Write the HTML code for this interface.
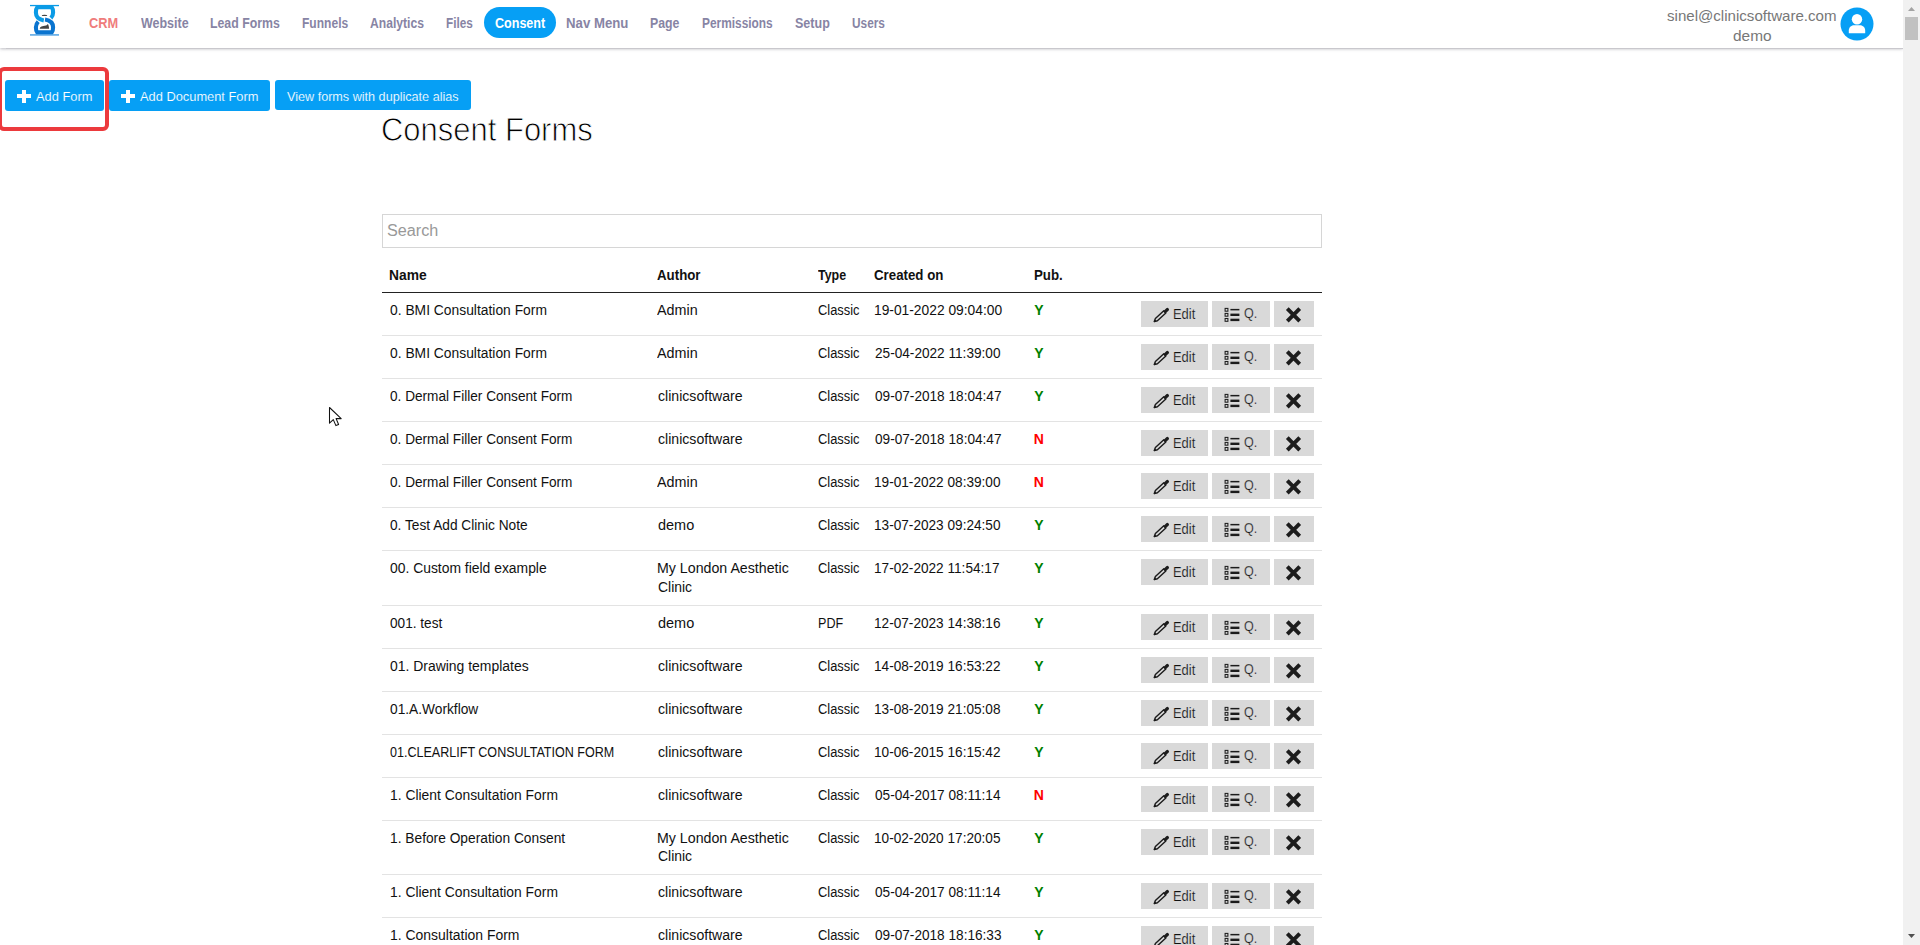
<!DOCTYPE html><html><head><meta charset="utf-8"><style>
html,body{margin:0;padding:0;background:#fff;width:1920px;height:945px;overflow:hidden;position:relative}
body{font-family:"Liberation Sans",sans-serif}
.t{position:absolute;white-space:nowrap;transform-origin:0 0;display:block}
.abs{position:absolute}
</style></head><body>

<div class="abs" style="left:0;top:0;width:1903px;height:48px;background:#fff;box-shadow:0 1px 3px rgba(60,60,80,0.35)"></div>
<div class="abs" style="left:6px;top:48px;width:1897px;height:1px;background:#c9c8cd"></div>
<svg class="abs" style="left:26px;top:2px" width="38" height="38" viewBox="0 0 38 38">
<rect x="4" y="2.9" width="29" height="1.3" fill="#0a9be6"/>
<rect x="4" y="32" width="29" height="1.8" fill="#6fb2e8"/>
<path d="M17.8,18.4 C12.5,17.5 9.9,14.5 9.9,10.5 C9.9,8.2 10.3,6.4 11.2,5.3 L25.8,5.3 C26.7,6.4 27.1,8.2 27.1,10.5 C27.1,12.8 26.3,14.6 24.9,16" fill="none" stroke="#0a9be6" stroke-width="4.1"/>
<path d="M19,17.4 C24.5,18.3 27.1,21.2 27.1,25.2 C27.1,27.5 26.7,29.3 25.8,30.3 L11.2,30.3 C10.3,29.3 9.9,27.5 9.9,25.2 C9.9,22.8 10.8,21 12.2,19.6" fill="none" stroke="#0a74cf" stroke-width="4.1"/>
<ellipse cx="18.5" cy="13.4" rx="2.8" ry="0.65" fill="#444"/>
<path d="M13.7,26.7 C14.1,24.5 16,24 20,23.5 C21,23.1 21.5,22.2 21.9,21.9 C22.7,23.3 23,25 23.1,26.7 Z" fill="#444"/>
</svg>
<div class="abs" style="left:484px;top:7px;width:72px;height:31px;border-radius:16px;background:#069ff5"></div>
<span class="t" style="left:89.23px;top:15.25px;font-size:14px;line-height:17px;color:#ef7c7c;font-weight:bold;transform:scaleX(0.9137);">CRM</span>
<span class="t" style="left:140.59px;top:15.25px;font-size:14px;line-height:17px;color:#8784a4;font-weight:bold;transform:scaleX(0.8913);">Website</span>
<span class="t" style="left:210.18px;top:15.25px;font-size:14px;line-height:17px;color:#8784a4;font-weight:bold;transform:scaleX(0.8787);">Lead Forms</span>
<span class="t" style="left:301.89px;top:15.25px;font-size:14px;line-height:17px;color:#8784a4;font-weight:bold;transform:scaleX(0.8608);">Funnels</span>
<span class="t" style="left:370.20px;top:15.25px;font-size:14px;line-height:17px;color:#8784a4;font-weight:bold;transform:scaleX(0.8659);">Analytics</span>
<span class="t" style="left:446.01px;top:15.25px;font-size:14px;line-height:17px;color:#8784a4;font-weight:bold;transform:scaleX(0.8390);">Files</span>
<span class="t" style="left:566.42px;top:15.25px;font-size:14px;line-height:17px;color:#8784a4;font-weight:bold;transform:scaleX(0.9430);">Nav Menu</span>
<span class="t" style="left:650.28px;top:15.25px;font-size:14px;line-height:17px;color:#8784a4;font-weight:bold;transform:scaleX(0.8800);">Page</span>
<span class="t" style="left:701.80px;top:15.25px;font-size:14px;line-height:17px;color:#8784a4;font-weight:bold;transform:scaleX(0.8489);">Permissions</span>
<span class="t" style="left:794.64px;top:15.25px;font-size:14px;line-height:17px;color:#8784a4;font-weight:bold;transform:scaleX(0.8942);">Setup</span>
<span class="t" style="left:851.59px;top:15.25px;font-size:14px;line-height:17px;color:#8784a4;font-weight:bold;transform:scaleX(0.8453);">Users</span>
<span class="t" style="left:494.59px;top:15.25px;font-size:14px;line-height:17px;color:#fff;font-weight:bold;transform:scaleX(0.8958);">Consent</span>
<span class="t" style="left:1667.38px;top:6.80px;font-size:15px;line-height:18px;color:#777;font-weight:normal;transform:scaleX(1.0054);">sinel@clinicsoftware.com</span>
<span class="t" style="left:1732.65px;top:27.00px;font-size:15px;line-height:18px;color:#777;font-weight:normal;transform:scaleX(1.0286);">demo</span>
<svg class="abs" style="left:1840px;top:7px" width="34" height="34" viewBox="0 0 34 34">
<circle cx="17" cy="17" r="16.5" fill="#069ff5"/>
<circle cx="17" cy="12.3" r="5.2" fill="#fff"/>
<path d="M8.8,26.2 L8.8,23.5 C8.8,20.5 11,18.2 14,18.2 L20,18.2 C23,18.2 25.2,20.5 25.2,23.5 L25.2,26.2 Z" fill="#fff"/>
</svg>
<div class="abs" style="left:1903px;top:0;width:17px;height:945px;background:#f1f1f1"></div>
<div class="abs" style="left:1905px;top:17px;width:13px;height:23px;background:#c1c1c1"></div>
<svg class="abs" style="left:1903px;top:0" width="17" height="945"><path d="M5,11 L12,11 L8.5,7 Z" fill="#a3a3a3"/><path d="M5,934 L12,934 L8.5,938 Z" fill="#505050"/></svg>
<div class="abs" style="left:5px;top:80px;width:99px;height:31px;border-radius:3px;background:#069ff5"></div>
<div class="abs" style="left:109px;top:80px;width:161px;height:31px;border-radius:3px;background:#069ff5"></div>
<div class="abs" style="left:275px;top:80px;width:196px;height:30px;border-radius:3px;background:#069ff5"></div>
<div class="abs" style="left:16.9px;top:94.3px;width:14.3px;height:3.8px;background:#fff"></div><div class="abs" style="left:21.799999999999997px;top:89.6px;width:4.6px;height:13.4px;background:#fff"></div>
<div class="abs" style="left:120.8px;top:94.3px;width:14.3px;height:3.8px;background:#fff"></div><div class="abs" style="left:125.7px;top:89.6px;width:4.6px;height:13.4px;background:#fff"></div>
<span class="t" style="left:36.37px;top:88.50px;font-size:13px;line-height:16px;color:#fff;font-weight:normal;transform:scaleX(0.9877);-webkit-text-stroke:0.15px #069ff5;">Add Form</span>
<span class="t" style="left:140.17px;top:88.50px;font-size:13px;line-height:16px;color:#fff;font-weight:normal;transform:scaleX(0.9878);-webkit-text-stroke:0.15px #069ff5;">Add Document Form</span>
<span class="t" style="left:287.04px;top:88.50px;font-size:13px;line-height:16px;color:#fff;font-weight:normal;transform:scaleX(0.9706);-webkit-text-stroke:0.15px #069ff5;">View forms with duplicate alias</span>
<div class="abs" style="left:-2px;top:67px;width:103px;height:56px;border:4px solid #ec3a3d;border-radius:6px"></div>
<span class="t" style="left:380.93px;top:108.92px;font-size:34px;line-height:41px;color:#000;font-weight:normal;transform:scaleX(0.9109);-webkit-text-stroke:0.9px #fff;">Consent Forms</span>
<div class="abs" style="left:382px;top:214px;width:938px;height:32px;border:1px solid #d6d6d6"></div>
<span class="t" style="left:387.26px;top:220.56px;font-size:16px;line-height:19px;color:#999;font-weight:normal;transform:scaleX(1.0117);">Search</span>
<span class="t" style="left:389.08px;top:266.65px;font-size:14px;line-height:17px;color:#111;font-weight:bold;transform:scaleX(0.9860);">Name</span>
<span class="t" style="left:657.17px;top:266.65px;font-size:14px;line-height:17px;color:#111;font-weight:bold;transform:scaleX(0.9489);">Author</span>
<span class="t" style="left:817.76px;top:266.65px;font-size:14px;line-height:17px;color:#111;font-weight:bold;transform:scaleX(0.8895);">Type</span>
<span class="t" style="left:873.96px;top:266.65px;font-size:14px;line-height:17px;color:#111;font-weight:bold;transform:scaleX(0.9486);">Created on</span>
<span class="t" style="left:1033.71px;top:266.65px;font-size:14px;line-height:17px;color:#111;font-weight:bold;transform:scaleX(0.9497);">Pub.</span>
<div class="abs" style="left:382px;top:292px;width:940px;height:1px;background:#222"></div>
<span class="t" style="left:390.16px;top:301.65px;font-size:14px;line-height:17px;color:#111;font-weight:normal;transform:scaleX(0.9888);">0. BMI Consultation Form</span>
<span class="t" style="left:657.07px;top:301.65px;font-size:14px;line-height:17px;color:#111;font-weight:normal;transform:scaleX(1.0246);">Admin</span>
<span class="t" style="left:818.05px;top:301.65px;font-size:14px;line-height:17px;color:#111;font-weight:normal;transform:scaleX(0.9197);">Classic</span>
<span class="t" style="left:874.15px;top:301.65px;font-size:14px;line-height:17px;color:#111;font-weight:normal;transform:scaleX(0.9853);">19-01-2022 09:04:00</span>
<span class="t" style="left:1034.36px;top:301.65px;font-size:14px;line-height:17px;color:#008000;font-weight:bold;transform:scaleX(1.0000);">Y</span>
<div class="abs" style="left:1141px;top:301px;width:67px;height:26px;background:#d9d9d9"></div>
<div class="abs" style="left:1212px;top:301px;width:58px;height:26px;background:#d9d9d9"></div>
<div class="abs" style="left:1274px;top:301px;width:40px;height:26px;background:#d9d9d9"></div>
<svg class="abs" style="left:1150px;top:301px" width="160" height="26" viewBox="0 0 160 26"><path d="M4.3,20.6 L7.4,19.75 L15.85,11.95 L13.8,9.75 L5.4,17.55 Z" fill="none" stroke="#1c1c1c" stroke-width="1.45" stroke-linejoin="round"/><path d="M4.2,20.7 L6.0,20.27 L4.76,18.95 Z" fill="#1c1c1c" stroke="#1c1c1c" stroke-width="0.8"/><path d="M15.4,10.4 L17.4,8.5" stroke="#1c1c1c" stroke-width="3.2" stroke-linecap="round"/><g transform="translate(62,0)"><rect x="13.1" y="7.4" width="2.8" height="2.8" fill="none" stroke="#1c1c1c" stroke-width="1.05"/><rect x="13.1" y="12.4" width="2.8" height="2.8" fill="none" stroke="#1c1c1c" stroke-width="1.05"/><rect x="13.1" y="17.5" width="2.8" height="2.8" fill="none" stroke="#1c1c1c" stroke-width="1.05"/><rect x="18.4" y="7.9" width="9" height="1.5" fill="#1c1c1c"/><rect x="18.4" y="12.6" width="9" height="2.4" fill="#1c1c1c"/><rect x="18.4" y="17.7" width="9" height="2.4" fill="#1c1c1c"/></g><g transform="translate(124,0)"><path d="M13.3,7.7 L25.7,20.1 M25.7,7.7 L13.3,20.1" stroke="#1c1c1c" stroke-width="3.9" fill="none"/></g></svg>
<span class="t" style="left:1172.84px;top:305.65px;font-size:14px;line-height:17px;color:#111;font-weight:normal;transform:scaleX(0.9225);-webkit-text-stroke:0.2px #d9d9d9;">Edit</span>
<span class="t" style="left:1243.91px;top:305.25px;font-size:14px;line-height:17px;color:#111;font-weight:normal;transform:scaleX(0.8958);-webkit-text-stroke:0.25px #d9d9d9;">Q.</span>
<div class="abs" style="left:382px;top:335px;width:940px;height:1px;background:#e3e3e3"></div>
<span class="t" style="left:390.16px;top:344.65px;font-size:14px;line-height:17px;color:#111;font-weight:normal;transform:scaleX(0.9888);">0. BMI Consultation Form</span>
<span class="t" style="left:657.07px;top:344.65px;font-size:14px;line-height:17px;color:#111;font-weight:normal;transform:scaleX(1.0246);">Admin</span>
<span class="t" style="left:818.05px;top:344.65px;font-size:14px;line-height:17px;color:#111;font-weight:normal;transform:scaleX(0.9197);">Classic</span>
<span class="t" style="left:874.51px;top:344.65px;font-size:14px;line-height:17px;color:#111;font-weight:normal;transform:scaleX(0.9731);">25-04-2022 11:39:00</span>
<span class="t" style="left:1034.36px;top:344.65px;font-size:14px;line-height:17px;color:#008000;font-weight:bold;transform:scaleX(1.0000);">Y</span>
<div class="abs" style="left:1141px;top:344px;width:67px;height:26px;background:#d9d9d9"></div>
<div class="abs" style="left:1212px;top:344px;width:58px;height:26px;background:#d9d9d9"></div>
<div class="abs" style="left:1274px;top:344px;width:40px;height:26px;background:#d9d9d9"></div>
<svg class="abs" style="left:1150px;top:344px" width="160" height="26" viewBox="0 0 160 26"><path d="M4.3,20.6 L7.4,19.75 L15.85,11.95 L13.8,9.75 L5.4,17.55 Z" fill="none" stroke="#1c1c1c" stroke-width="1.45" stroke-linejoin="round"/><path d="M4.2,20.7 L6.0,20.27 L4.76,18.95 Z" fill="#1c1c1c" stroke="#1c1c1c" stroke-width="0.8"/><path d="M15.4,10.4 L17.4,8.5" stroke="#1c1c1c" stroke-width="3.2" stroke-linecap="round"/><g transform="translate(62,0)"><rect x="13.1" y="7.4" width="2.8" height="2.8" fill="none" stroke="#1c1c1c" stroke-width="1.05"/><rect x="13.1" y="12.4" width="2.8" height="2.8" fill="none" stroke="#1c1c1c" stroke-width="1.05"/><rect x="13.1" y="17.5" width="2.8" height="2.8" fill="none" stroke="#1c1c1c" stroke-width="1.05"/><rect x="18.4" y="7.9" width="9" height="1.5" fill="#1c1c1c"/><rect x="18.4" y="12.6" width="9" height="2.4" fill="#1c1c1c"/><rect x="18.4" y="17.7" width="9" height="2.4" fill="#1c1c1c"/></g><g transform="translate(124,0)"><path d="M13.3,7.7 L25.7,20.1 M25.7,7.7 L13.3,20.1" stroke="#1c1c1c" stroke-width="3.9" fill="none"/></g></svg>
<span class="t" style="left:1172.84px;top:348.65px;font-size:14px;line-height:17px;color:#111;font-weight:normal;transform:scaleX(0.9225);-webkit-text-stroke:0.2px #d9d9d9;">Edit</span>
<span class="t" style="left:1243.91px;top:348.25px;font-size:14px;line-height:17px;color:#111;font-weight:normal;transform:scaleX(0.8958);-webkit-text-stroke:0.25px #d9d9d9;">Q.</span>
<div class="abs" style="left:382px;top:378px;width:940px;height:1px;background:#e3e3e3"></div>
<span class="t" style="left:390.17px;top:387.65px;font-size:14px;line-height:17px;color:#111;font-weight:normal;transform:scaleX(0.9730);">0. Dermal Filler Consent Form</span>
<span class="t" style="left:658.00px;top:387.65px;font-size:14px;line-height:17px;color:#111;font-weight:normal;transform:scaleX(1.0071);">clinicsoftware</span>
<span class="t" style="left:818.05px;top:387.65px;font-size:14px;line-height:17px;color:#111;font-weight:normal;transform:scaleX(0.9197);">Classic</span>
<span class="t" style="left:874.67px;top:387.65px;font-size:14px;line-height:17px;color:#111;font-weight:normal;transform:scaleX(0.9731);">09-07-2018 18:04:47</span>
<span class="t" style="left:1034.36px;top:387.65px;font-size:14px;line-height:17px;color:#008000;font-weight:bold;transform:scaleX(1.0000);">Y</span>
<div class="abs" style="left:1141px;top:387px;width:67px;height:26px;background:#d9d9d9"></div>
<div class="abs" style="left:1212px;top:387px;width:58px;height:26px;background:#d9d9d9"></div>
<div class="abs" style="left:1274px;top:387px;width:40px;height:26px;background:#d9d9d9"></div>
<svg class="abs" style="left:1150px;top:387px" width="160" height="26" viewBox="0 0 160 26"><path d="M4.3,20.6 L7.4,19.75 L15.85,11.95 L13.8,9.75 L5.4,17.55 Z" fill="none" stroke="#1c1c1c" stroke-width="1.45" stroke-linejoin="round"/><path d="M4.2,20.7 L6.0,20.27 L4.76,18.95 Z" fill="#1c1c1c" stroke="#1c1c1c" stroke-width="0.8"/><path d="M15.4,10.4 L17.4,8.5" stroke="#1c1c1c" stroke-width="3.2" stroke-linecap="round"/><g transform="translate(62,0)"><rect x="13.1" y="7.4" width="2.8" height="2.8" fill="none" stroke="#1c1c1c" stroke-width="1.05"/><rect x="13.1" y="12.4" width="2.8" height="2.8" fill="none" stroke="#1c1c1c" stroke-width="1.05"/><rect x="13.1" y="17.5" width="2.8" height="2.8" fill="none" stroke="#1c1c1c" stroke-width="1.05"/><rect x="18.4" y="7.9" width="9" height="1.5" fill="#1c1c1c"/><rect x="18.4" y="12.6" width="9" height="2.4" fill="#1c1c1c"/><rect x="18.4" y="17.7" width="9" height="2.4" fill="#1c1c1c"/></g><g transform="translate(124,0)"><path d="M13.3,7.7 L25.7,20.1 M25.7,7.7 L13.3,20.1" stroke="#1c1c1c" stroke-width="3.9" fill="none"/></g></svg>
<span class="t" style="left:1172.84px;top:391.65px;font-size:14px;line-height:17px;color:#111;font-weight:normal;transform:scaleX(0.9225);-webkit-text-stroke:0.2px #d9d9d9;">Edit</span>
<span class="t" style="left:1243.91px;top:391.25px;font-size:14px;line-height:17px;color:#111;font-weight:normal;transform:scaleX(0.8958);-webkit-text-stroke:0.25px #d9d9d9;">Q.</span>
<div class="abs" style="left:382px;top:421px;width:940px;height:1px;background:#e3e3e3"></div>
<span class="t" style="left:390.17px;top:430.65px;font-size:14px;line-height:17px;color:#111;font-weight:normal;transform:scaleX(0.9730);">0. Dermal Filler Consent Form</span>
<span class="t" style="left:658.00px;top:430.65px;font-size:14px;line-height:17px;color:#111;font-weight:normal;transform:scaleX(1.0071);">clinicsoftware</span>
<span class="t" style="left:818.05px;top:430.65px;font-size:14px;line-height:17px;color:#111;font-weight:normal;transform:scaleX(0.9197);">Classic</span>
<span class="t" style="left:874.67px;top:430.65px;font-size:14px;line-height:17px;color:#111;font-weight:normal;transform:scaleX(0.9731);">09-07-2018 18:04:47</span>
<span class="t" style="left:1033.66px;top:430.65px;font-size:14px;line-height:17px;color:#f00;font-weight:bold;transform:scaleX(1.0000);">N</span>
<div class="abs" style="left:1141px;top:430px;width:67px;height:26px;background:#d9d9d9"></div>
<div class="abs" style="left:1212px;top:430px;width:58px;height:26px;background:#d9d9d9"></div>
<div class="abs" style="left:1274px;top:430px;width:40px;height:26px;background:#d9d9d9"></div>
<svg class="abs" style="left:1150px;top:430px" width="160" height="26" viewBox="0 0 160 26"><path d="M4.3,20.6 L7.4,19.75 L15.85,11.95 L13.8,9.75 L5.4,17.55 Z" fill="none" stroke="#1c1c1c" stroke-width="1.45" stroke-linejoin="round"/><path d="M4.2,20.7 L6.0,20.27 L4.76,18.95 Z" fill="#1c1c1c" stroke="#1c1c1c" stroke-width="0.8"/><path d="M15.4,10.4 L17.4,8.5" stroke="#1c1c1c" stroke-width="3.2" stroke-linecap="round"/><g transform="translate(62,0)"><rect x="13.1" y="7.4" width="2.8" height="2.8" fill="none" stroke="#1c1c1c" stroke-width="1.05"/><rect x="13.1" y="12.4" width="2.8" height="2.8" fill="none" stroke="#1c1c1c" stroke-width="1.05"/><rect x="13.1" y="17.5" width="2.8" height="2.8" fill="none" stroke="#1c1c1c" stroke-width="1.05"/><rect x="18.4" y="7.9" width="9" height="1.5" fill="#1c1c1c"/><rect x="18.4" y="12.6" width="9" height="2.4" fill="#1c1c1c"/><rect x="18.4" y="17.7" width="9" height="2.4" fill="#1c1c1c"/></g><g transform="translate(124,0)"><path d="M13.3,7.7 L25.7,20.1 M25.7,7.7 L13.3,20.1" stroke="#1c1c1c" stroke-width="3.9" fill="none"/></g></svg>
<span class="t" style="left:1172.84px;top:434.65px;font-size:14px;line-height:17px;color:#111;font-weight:normal;transform:scaleX(0.9225);-webkit-text-stroke:0.2px #d9d9d9;">Edit</span>
<span class="t" style="left:1243.91px;top:434.25px;font-size:14px;line-height:17px;color:#111;font-weight:normal;transform:scaleX(0.8958);-webkit-text-stroke:0.25px #d9d9d9;">Q.</span>
<div class="abs" style="left:382px;top:464px;width:940px;height:1px;background:#e3e3e3"></div>
<span class="t" style="left:390.17px;top:473.65px;font-size:14px;line-height:17px;color:#111;font-weight:normal;transform:scaleX(0.9730);">0. Dermal Filler Consent Form</span>
<span class="t" style="left:657.07px;top:473.65px;font-size:14px;line-height:17px;color:#111;font-weight:normal;transform:scaleX(1.0246);">Admin</span>
<span class="t" style="left:818.05px;top:473.65px;font-size:14px;line-height:17px;color:#111;font-weight:normal;transform:scaleX(0.9197);">Classic</span>
<span class="t" style="left:874.16px;top:473.65px;font-size:14px;line-height:17px;color:#111;font-weight:normal;transform:scaleX(0.9731);">19-01-2022 08:39:00</span>
<span class="t" style="left:1033.66px;top:473.65px;font-size:14px;line-height:17px;color:#f00;font-weight:bold;transform:scaleX(1.0000);">N</span>
<div class="abs" style="left:1141px;top:473px;width:67px;height:26px;background:#d9d9d9"></div>
<div class="abs" style="left:1212px;top:473px;width:58px;height:26px;background:#d9d9d9"></div>
<div class="abs" style="left:1274px;top:473px;width:40px;height:26px;background:#d9d9d9"></div>
<svg class="abs" style="left:1150px;top:473px" width="160" height="26" viewBox="0 0 160 26"><path d="M4.3,20.6 L7.4,19.75 L15.85,11.95 L13.8,9.75 L5.4,17.55 Z" fill="none" stroke="#1c1c1c" stroke-width="1.45" stroke-linejoin="round"/><path d="M4.2,20.7 L6.0,20.27 L4.76,18.95 Z" fill="#1c1c1c" stroke="#1c1c1c" stroke-width="0.8"/><path d="M15.4,10.4 L17.4,8.5" stroke="#1c1c1c" stroke-width="3.2" stroke-linecap="round"/><g transform="translate(62,0)"><rect x="13.1" y="7.4" width="2.8" height="2.8" fill="none" stroke="#1c1c1c" stroke-width="1.05"/><rect x="13.1" y="12.4" width="2.8" height="2.8" fill="none" stroke="#1c1c1c" stroke-width="1.05"/><rect x="13.1" y="17.5" width="2.8" height="2.8" fill="none" stroke="#1c1c1c" stroke-width="1.05"/><rect x="18.4" y="7.9" width="9" height="1.5" fill="#1c1c1c"/><rect x="18.4" y="12.6" width="9" height="2.4" fill="#1c1c1c"/><rect x="18.4" y="17.7" width="9" height="2.4" fill="#1c1c1c"/></g><g transform="translate(124,0)"><path d="M13.3,7.7 L25.7,20.1 M25.7,7.7 L13.3,20.1" stroke="#1c1c1c" stroke-width="3.9" fill="none"/></g></svg>
<span class="t" style="left:1172.84px;top:477.65px;font-size:14px;line-height:17px;color:#111;font-weight:normal;transform:scaleX(0.9225);-webkit-text-stroke:0.2px #d9d9d9;">Edit</span>
<span class="t" style="left:1243.91px;top:477.25px;font-size:14px;line-height:17px;color:#111;font-weight:normal;transform:scaleX(0.8958);-webkit-text-stroke:0.25px #d9d9d9;">Q.</span>
<div class="abs" style="left:382px;top:507px;width:940px;height:1px;background:#e3e3e3"></div>
<span class="t" style="left:390.16px;top:516.65px;font-size:14px;line-height:17px;color:#111;font-weight:normal;transform:scaleX(0.9789);">0. Test Add Clinic Note</span>
<span class="t" style="left:657.99px;top:516.65px;font-size:14px;line-height:17px;color:#111;font-weight:normal;transform:scaleX(1.0341);">demo</span>
<span class="t" style="left:818.05px;top:516.65px;font-size:14px;line-height:17px;color:#111;font-weight:normal;transform:scaleX(0.9197);">Classic</span>
<span class="t" style="left:874.16px;top:516.65px;font-size:14px;line-height:17px;color:#111;font-weight:normal;transform:scaleX(0.9731);">13-07-2023 09:24:50</span>
<span class="t" style="left:1034.36px;top:516.65px;font-size:14px;line-height:17px;color:#008000;font-weight:bold;transform:scaleX(1.0000);">Y</span>
<div class="abs" style="left:1141px;top:516px;width:67px;height:26px;background:#d9d9d9"></div>
<div class="abs" style="left:1212px;top:516px;width:58px;height:26px;background:#d9d9d9"></div>
<div class="abs" style="left:1274px;top:516px;width:40px;height:26px;background:#d9d9d9"></div>
<svg class="abs" style="left:1150px;top:516px" width="160" height="26" viewBox="0 0 160 26"><path d="M4.3,20.6 L7.4,19.75 L15.85,11.95 L13.8,9.75 L5.4,17.55 Z" fill="none" stroke="#1c1c1c" stroke-width="1.45" stroke-linejoin="round"/><path d="M4.2,20.7 L6.0,20.27 L4.76,18.95 Z" fill="#1c1c1c" stroke="#1c1c1c" stroke-width="0.8"/><path d="M15.4,10.4 L17.4,8.5" stroke="#1c1c1c" stroke-width="3.2" stroke-linecap="round"/><g transform="translate(62,0)"><rect x="13.1" y="7.4" width="2.8" height="2.8" fill="none" stroke="#1c1c1c" stroke-width="1.05"/><rect x="13.1" y="12.4" width="2.8" height="2.8" fill="none" stroke="#1c1c1c" stroke-width="1.05"/><rect x="13.1" y="17.5" width="2.8" height="2.8" fill="none" stroke="#1c1c1c" stroke-width="1.05"/><rect x="18.4" y="7.9" width="9" height="1.5" fill="#1c1c1c"/><rect x="18.4" y="12.6" width="9" height="2.4" fill="#1c1c1c"/><rect x="18.4" y="17.7" width="9" height="2.4" fill="#1c1c1c"/></g><g transform="translate(124,0)"><path d="M13.3,7.7 L25.7,20.1 M25.7,7.7 L13.3,20.1" stroke="#1c1c1c" stroke-width="3.9" fill="none"/></g></svg>
<span class="t" style="left:1172.84px;top:520.65px;font-size:14px;line-height:17px;color:#111;font-weight:normal;transform:scaleX(0.9225);-webkit-text-stroke:0.2px #d9d9d9;">Edit</span>
<span class="t" style="left:1243.91px;top:520.25px;font-size:14px;line-height:17px;color:#111;font-weight:normal;transform:scaleX(0.8958);-webkit-text-stroke:0.25px #d9d9d9;">Q.</span>
<div class="abs" style="left:382px;top:550px;width:940px;height:1px;background:#e3e3e3"></div>
<span class="t" style="left:390.16px;top:559.65px;font-size:14px;line-height:17px;color:#111;font-weight:normal;transform:scaleX(0.9917);">00. Custom field example</span>
<span class="t" style="left:657.44px;top:559.65px;font-size:14px;line-height:17px;color:#111;font-weight:normal;transform:scaleX(1.0137);">My London Aesthetic</span>
<span class="t" style="left:657.89px;top:578.65px;font-size:14px;line-height:17px;color:#111;font-weight:normal;transform:scaleX(0.9956);">Clinic</span>
<span class="t" style="left:818.05px;top:559.65px;font-size:14px;line-height:17px;color:#111;font-weight:normal;transform:scaleX(0.9197);">Classic</span>
<span class="t" style="left:874.16px;top:559.65px;font-size:14px;line-height:17px;color:#111;font-weight:normal;transform:scaleX(0.9731);">17-02-2022 11:54:17</span>
<span class="t" style="left:1034.36px;top:559.65px;font-size:14px;line-height:17px;color:#008000;font-weight:bold;transform:scaleX(1.0000);">Y</span>
<div class="abs" style="left:1141px;top:559px;width:67px;height:26px;background:#d9d9d9"></div>
<div class="abs" style="left:1212px;top:559px;width:58px;height:26px;background:#d9d9d9"></div>
<div class="abs" style="left:1274px;top:559px;width:40px;height:26px;background:#d9d9d9"></div>
<svg class="abs" style="left:1150px;top:559px" width="160" height="26" viewBox="0 0 160 26"><path d="M4.3,20.6 L7.4,19.75 L15.85,11.95 L13.8,9.75 L5.4,17.55 Z" fill="none" stroke="#1c1c1c" stroke-width="1.45" stroke-linejoin="round"/><path d="M4.2,20.7 L6.0,20.27 L4.76,18.95 Z" fill="#1c1c1c" stroke="#1c1c1c" stroke-width="0.8"/><path d="M15.4,10.4 L17.4,8.5" stroke="#1c1c1c" stroke-width="3.2" stroke-linecap="round"/><g transform="translate(62,0)"><rect x="13.1" y="7.4" width="2.8" height="2.8" fill="none" stroke="#1c1c1c" stroke-width="1.05"/><rect x="13.1" y="12.4" width="2.8" height="2.8" fill="none" stroke="#1c1c1c" stroke-width="1.05"/><rect x="13.1" y="17.5" width="2.8" height="2.8" fill="none" stroke="#1c1c1c" stroke-width="1.05"/><rect x="18.4" y="7.9" width="9" height="1.5" fill="#1c1c1c"/><rect x="18.4" y="12.6" width="9" height="2.4" fill="#1c1c1c"/><rect x="18.4" y="17.7" width="9" height="2.4" fill="#1c1c1c"/></g><g transform="translate(124,0)"><path d="M13.3,7.7 L25.7,20.1 M25.7,7.7 L13.3,20.1" stroke="#1c1c1c" stroke-width="3.9" fill="none"/></g></svg>
<span class="t" style="left:1172.84px;top:563.65px;font-size:14px;line-height:17px;color:#111;font-weight:normal;transform:scaleX(0.9225);-webkit-text-stroke:0.2px #d9d9d9;">Edit</span>
<span class="t" style="left:1243.91px;top:563.25px;font-size:14px;line-height:17px;color:#111;font-weight:normal;transform:scaleX(0.8958);-webkit-text-stroke:0.25px #d9d9d9;">Q.</span>
<div class="abs" style="left:382px;top:605px;width:940px;height:1px;background:#e3e3e3"></div>
<span class="t" style="left:390.17px;top:614.65px;font-size:14px;line-height:17px;color:#111;font-weight:normal;transform:scaleX(0.9726);">001. test</span>
<span class="t" style="left:657.99px;top:614.65px;font-size:14px;line-height:17px;color:#111;font-weight:normal;transform:scaleX(1.0341);">demo</span>
<span class="t" style="left:817.67px;top:614.65px;font-size:14px;line-height:17px;color:#111;font-weight:normal;transform:scaleX(0.8976);">PDF</span>
<span class="t" style="left:874.16px;top:614.65px;font-size:14px;line-height:17px;color:#111;font-weight:normal;transform:scaleX(0.9731);">12-07-2023 14:38:16</span>
<span class="t" style="left:1034.36px;top:614.65px;font-size:14px;line-height:17px;color:#008000;font-weight:bold;transform:scaleX(1.0000);">Y</span>
<div class="abs" style="left:1141px;top:614px;width:67px;height:26px;background:#d9d9d9"></div>
<div class="abs" style="left:1212px;top:614px;width:58px;height:26px;background:#d9d9d9"></div>
<div class="abs" style="left:1274px;top:614px;width:40px;height:26px;background:#d9d9d9"></div>
<svg class="abs" style="left:1150px;top:614px" width="160" height="26" viewBox="0 0 160 26"><path d="M4.3,20.6 L7.4,19.75 L15.85,11.95 L13.8,9.75 L5.4,17.55 Z" fill="none" stroke="#1c1c1c" stroke-width="1.45" stroke-linejoin="round"/><path d="M4.2,20.7 L6.0,20.27 L4.76,18.95 Z" fill="#1c1c1c" stroke="#1c1c1c" stroke-width="0.8"/><path d="M15.4,10.4 L17.4,8.5" stroke="#1c1c1c" stroke-width="3.2" stroke-linecap="round"/><g transform="translate(62,0)"><rect x="13.1" y="7.4" width="2.8" height="2.8" fill="none" stroke="#1c1c1c" stroke-width="1.05"/><rect x="13.1" y="12.4" width="2.8" height="2.8" fill="none" stroke="#1c1c1c" stroke-width="1.05"/><rect x="13.1" y="17.5" width="2.8" height="2.8" fill="none" stroke="#1c1c1c" stroke-width="1.05"/><rect x="18.4" y="7.9" width="9" height="1.5" fill="#1c1c1c"/><rect x="18.4" y="12.6" width="9" height="2.4" fill="#1c1c1c"/><rect x="18.4" y="17.7" width="9" height="2.4" fill="#1c1c1c"/></g><g transform="translate(124,0)"><path d="M13.3,7.7 L25.7,20.1 M25.7,7.7 L13.3,20.1" stroke="#1c1c1c" stroke-width="3.9" fill="none"/></g></svg>
<span class="t" style="left:1172.84px;top:618.65px;font-size:14px;line-height:17px;color:#111;font-weight:normal;transform:scaleX(0.9225);-webkit-text-stroke:0.2px #d9d9d9;">Edit</span>
<span class="t" style="left:1243.91px;top:618.25px;font-size:14px;line-height:17px;color:#111;font-weight:normal;transform:scaleX(0.8958);-webkit-text-stroke:0.25px #d9d9d9;">Q.</span>
<div class="abs" style="left:382px;top:648px;width:940px;height:1px;background:#e3e3e3"></div>
<span class="t" style="left:390.16px;top:657.65px;font-size:14px;line-height:17px;color:#111;font-weight:normal;transform:scaleX(0.9954);">01. Drawing templates</span>
<span class="t" style="left:658.00px;top:657.65px;font-size:14px;line-height:17px;color:#111;font-weight:normal;transform:scaleX(1.0071);">clinicsoftware</span>
<span class="t" style="left:818.05px;top:657.65px;font-size:14px;line-height:17px;color:#111;font-weight:normal;transform:scaleX(0.9197);">Classic</span>
<span class="t" style="left:874.16px;top:657.65px;font-size:14px;line-height:17px;color:#111;font-weight:normal;transform:scaleX(0.9731);">14-08-2019 16:53:22</span>
<span class="t" style="left:1034.36px;top:657.65px;font-size:14px;line-height:17px;color:#008000;font-weight:bold;transform:scaleX(1.0000);">Y</span>
<div class="abs" style="left:1141px;top:657px;width:67px;height:26px;background:#d9d9d9"></div>
<div class="abs" style="left:1212px;top:657px;width:58px;height:26px;background:#d9d9d9"></div>
<div class="abs" style="left:1274px;top:657px;width:40px;height:26px;background:#d9d9d9"></div>
<svg class="abs" style="left:1150px;top:657px" width="160" height="26" viewBox="0 0 160 26"><path d="M4.3,20.6 L7.4,19.75 L15.85,11.95 L13.8,9.75 L5.4,17.55 Z" fill="none" stroke="#1c1c1c" stroke-width="1.45" stroke-linejoin="round"/><path d="M4.2,20.7 L6.0,20.27 L4.76,18.95 Z" fill="#1c1c1c" stroke="#1c1c1c" stroke-width="0.8"/><path d="M15.4,10.4 L17.4,8.5" stroke="#1c1c1c" stroke-width="3.2" stroke-linecap="round"/><g transform="translate(62,0)"><rect x="13.1" y="7.4" width="2.8" height="2.8" fill="none" stroke="#1c1c1c" stroke-width="1.05"/><rect x="13.1" y="12.4" width="2.8" height="2.8" fill="none" stroke="#1c1c1c" stroke-width="1.05"/><rect x="13.1" y="17.5" width="2.8" height="2.8" fill="none" stroke="#1c1c1c" stroke-width="1.05"/><rect x="18.4" y="7.9" width="9" height="1.5" fill="#1c1c1c"/><rect x="18.4" y="12.6" width="9" height="2.4" fill="#1c1c1c"/><rect x="18.4" y="17.7" width="9" height="2.4" fill="#1c1c1c"/></g><g transform="translate(124,0)"><path d="M13.3,7.7 L25.7,20.1 M25.7,7.7 L13.3,20.1" stroke="#1c1c1c" stroke-width="3.9" fill="none"/></g></svg>
<span class="t" style="left:1172.84px;top:661.65px;font-size:14px;line-height:17px;color:#111;font-weight:normal;transform:scaleX(0.9225);-webkit-text-stroke:0.2px #d9d9d9;">Edit</span>
<span class="t" style="left:1243.91px;top:661.25px;font-size:14px;line-height:17px;color:#111;font-weight:normal;transform:scaleX(0.8958);-webkit-text-stroke:0.25px #d9d9d9;">Q.</span>
<div class="abs" style="left:382px;top:691px;width:940px;height:1px;background:#e3e3e3"></div>
<span class="t" style="left:390.16px;top:700.65px;font-size:14px;line-height:17px;color:#111;font-weight:normal;transform:scaleX(0.9807);">01.A.Workflow</span>
<span class="t" style="left:658.00px;top:700.65px;font-size:14px;line-height:17px;color:#111;font-weight:normal;transform:scaleX(1.0071);">clinicsoftware</span>
<span class="t" style="left:818.05px;top:700.65px;font-size:14px;line-height:17px;color:#111;font-weight:normal;transform:scaleX(0.9197);">Classic</span>
<span class="t" style="left:874.16px;top:700.65px;font-size:14px;line-height:17px;color:#111;font-weight:normal;transform:scaleX(0.9731);">13-08-2019 21:05:08</span>
<span class="t" style="left:1034.36px;top:700.65px;font-size:14px;line-height:17px;color:#008000;font-weight:bold;transform:scaleX(1.0000);">Y</span>
<div class="abs" style="left:1141px;top:700px;width:67px;height:26px;background:#d9d9d9"></div>
<div class="abs" style="left:1212px;top:700px;width:58px;height:26px;background:#d9d9d9"></div>
<div class="abs" style="left:1274px;top:700px;width:40px;height:26px;background:#d9d9d9"></div>
<svg class="abs" style="left:1150px;top:700px" width="160" height="26" viewBox="0 0 160 26"><path d="M4.3,20.6 L7.4,19.75 L15.85,11.95 L13.8,9.75 L5.4,17.55 Z" fill="none" stroke="#1c1c1c" stroke-width="1.45" stroke-linejoin="round"/><path d="M4.2,20.7 L6.0,20.27 L4.76,18.95 Z" fill="#1c1c1c" stroke="#1c1c1c" stroke-width="0.8"/><path d="M15.4,10.4 L17.4,8.5" stroke="#1c1c1c" stroke-width="3.2" stroke-linecap="round"/><g transform="translate(62,0)"><rect x="13.1" y="7.4" width="2.8" height="2.8" fill="none" stroke="#1c1c1c" stroke-width="1.05"/><rect x="13.1" y="12.4" width="2.8" height="2.8" fill="none" stroke="#1c1c1c" stroke-width="1.05"/><rect x="13.1" y="17.5" width="2.8" height="2.8" fill="none" stroke="#1c1c1c" stroke-width="1.05"/><rect x="18.4" y="7.9" width="9" height="1.5" fill="#1c1c1c"/><rect x="18.4" y="12.6" width="9" height="2.4" fill="#1c1c1c"/><rect x="18.4" y="17.7" width="9" height="2.4" fill="#1c1c1c"/></g><g transform="translate(124,0)"><path d="M13.3,7.7 L25.7,20.1 M25.7,7.7 L13.3,20.1" stroke="#1c1c1c" stroke-width="3.9" fill="none"/></g></svg>
<span class="t" style="left:1172.84px;top:704.65px;font-size:14px;line-height:17px;color:#111;font-weight:normal;transform:scaleX(0.9225);-webkit-text-stroke:0.2px #d9d9d9;">Edit</span>
<span class="t" style="left:1243.91px;top:704.25px;font-size:14px;line-height:17px;color:#111;font-weight:normal;transform:scaleX(0.8958);-webkit-text-stroke:0.25px #d9d9d9;">Q.</span>
<div class="abs" style="left:382px;top:734px;width:940px;height:1px;background:#e3e3e3"></div>
<span class="t" style="left:390.21px;top:743.65px;font-size:14px;line-height:17px;color:#111;font-weight:normal;transform:scaleX(0.8960);">01.CLEARLIFT CONSULTATION FORM</span>
<span class="t" style="left:658.00px;top:743.65px;font-size:14px;line-height:17px;color:#111;font-weight:normal;transform:scaleX(1.0071);">clinicsoftware</span>
<span class="t" style="left:818.05px;top:743.65px;font-size:14px;line-height:17px;color:#111;font-weight:normal;transform:scaleX(0.9197);">Classic</span>
<span class="t" style="left:874.16px;top:743.65px;font-size:14px;line-height:17px;color:#111;font-weight:normal;transform:scaleX(0.9731);">10-06-2015 16:15:42</span>
<span class="t" style="left:1034.36px;top:743.65px;font-size:14px;line-height:17px;color:#008000;font-weight:bold;transform:scaleX(1.0000);">Y</span>
<div class="abs" style="left:1141px;top:743px;width:67px;height:26px;background:#d9d9d9"></div>
<div class="abs" style="left:1212px;top:743px;width:58px;height:26px;background:#d9d9d9"></div>
<div class="abs" style="left:1274px;top:743px;width:40px;height:26px;background:#d9d9d9"></div>
<svg class="abs" style="left:1150px;top:743px" width="160" height="26" viewBox="0 0 160 26"><path d="M4.3,20.6 L7.4,19.75 L15.85,11.95 L13.8,9.75 L5.4,17.55 Z" fill="none" stroke="#1c1c1c" stroke-width="1.45" stroke-linejoin="round"/><path d="M4.2,20.7 L6.0,20.27 L4.76,18.95 Z" fill="#1c1c1c" stroke="#1c1c1c" stroke-width="0.8"/><path d="M15.4,10.4 L17.4,8.5" stroke="#1c1c1c" stroke-width="3.2" stroke-linecap="round"/><g transform="translate(62,0)"><rect x="13.1" y="7.4" width="2.8" height="2.8" fill="none" stroke="#1c1c1c" stroke-width="1.05"/><rect x="13.1" y="12.4" width="2.8" height="2.8" fill="none" stroke="#1c1c1c" stroke-width="1.05"/><rect x="13.1" y="17.5" width="2.8" height="2.8" fill="none" stroke="#1c1c1c" stroke-width="1.05"/><rect x="18.4" y="7.9" width="9" height="1.5" fill="#1c1c1c"/><rect x="18.4" y="12.6" width="9" height="2.4" fill="#1c1c1c"/><rect x="18.4" y="17.7" width="9" height="2.4" fill="#1c1c1c"/></g><g transform="translate(124,0)"><path d="M13.3,7.7 L25.7,20.1 M25.7,7.7 L13.3,20.1" stroke="#1c1c1c" stroke-width="3.9" fill="none"/></g></svg>
<span class="t" style="left:1172.84px;top:747.65px;font-size:14px;line-height:17px;color:#111;font-weight:normal;transform:scaleX(0.9225);-webkit-text-stroke:0.2px #d9d9d9;">Edit</span>
<span class="t" style="left:1243.91px;top:747.25px;font-size:14px;line-height:17px;color:#111;font-weight:normal;transform:scaleX(0.8958);-webkit-text-stroke:0.25px #d9d9d9;">Q.</span>
<div class="abs" style="left:382px;top:777px;width:940px;height:1px;background:#e3e3e3"></div>
<span class="t" style="left:389.64px;top:786.65px;font-size:14px;line-height:17px;color:#111;font-weight:normal;transform:scaleX(0.9902);">1. Client Consultation Form</span>
<span class="t" style="left:658.00px;top:786.65px;font-size:14px;line-height:17px;color:#111;font-weight:normal;transform:scaleX(1.0071);">clinicsoftware</span>
<span class="t" style="left:818.05px;top:786.65px;font-size:14px;line-height:17px;color:#111;font-weight:normal;transform:scaleX(0.9197);">Classic</span>
<span class="t" style="left:874.67px;top:786.65px;font-size:14px;line-height:17px;color:#111;font-weight:normal;transform:scaleX(0.9731);">05-04-2017 08:11:14</span>
<span class="t" style="left:1033.66px;top:786.65px;font-size:14px;line-height:17px;color:#f00;font-weight:bold;transform:scaleX(1.0000);">N</span>
<div class="abs" style="left:1141px;top:786px;width:67px;height:26px;background:#d9d9d9"></div>
<div class="abs" style="left:1212px;top:786px;width:58px;height:26px;background:#d9d9d9"></div>
<div class="abs" style="left:1274px;top:786px;width:40px;height:26px;background:#d9d9d9"></div>
<svg class="abs" style="left:1150px;top:786px" width="160" height="26" viewBox="0 0 160 26"><path d="M4.3,20.6 L7.4,19.75 L15.85,11.95 L13.8,9.75 L5.4,17.55 Z" fill="none" stroke="#1c1c1c" stroke-width="1.45" stroke-linejoin="round"/><path d="M4.2,20.7 L6.0,20.27 L4.76,18.95 Z" fill="#1c1c1c" stroke="#1c1c1c" stroke-width="0.8"/><path d="M15.4,10.4 L17.4,8.5" stroke="#1c1c1c" stroke-width="3.2" stroke-linecap="round"/><g transform="translate(62,0)"><rect x="13.1" y="7.4" width="2.8" height="2.8" fill="none" stroke="#1c1c1c" stroke-width="1.05"/><rect x="13.1" y="12.4" width="2.8" height="2.8" fill="none" stroke="#1c1c1c" stroke-width="1.05"/><rect x="13.1" y="17.5" width="2.8" height="2.8" fill="none" stroke="#1c1c1c" stroke-width="1.05"/><rect x="18.4" y="7.9" width="9" height="1.5" fill="#1c1c1c"/><rect x="18.4" y="12.6" width="9" height="2.4" fill="#1c1c1c"/><rect x="18.4" y="17.7" width="9" height="2.4" fill="#1c1c1c"/></g><g transform="translate(124,0)"><path d="M13.3,7.7 L25.7,20.1 M25.7,7.7 L13.3,20.1" stroke="#1c1c1c" stroke-width="3.9" fill="none"/></g></svg>
<span class="t" style="left:1172.84px;top:790.65px;font-size:14px;line-height:17px;color:#111;font-weight:normal;transform:scaleX(0.9225);-webkit-text-stroke:0.2px #d9d9d9;">Edit</span>
<span class="t" style="left:1243.91px;top:790.25px;font-size:14px;line-height:17px;color:#111;font-weight:normal;transform:scaleX(0.8958);-webkit-text-stroke:0.25px #d9d9d9;">Q.</span>
<div class="abs" style="left:382px;top:820px;width:940px;height:1px;background:#e3e3e3"></div>
<span class="t" style="left:389.65px;top:829.65px;font-size:14px;line-height:17px;color:#111;font-weight:normal;transform:scaleX(0.9828);">1. Before Operation Consent</span>
<span class="t" style="left:657.44px;top:829.65px;font-size:14px;line-height:17px;color:#111;font-weight:normal;transform:scaleX(1.0137);">My London Aesthetic</span>
<span class="t" style="left:657.89px;top:847.65px;font-size:14px;line-height:17px;color:#111;font-weight:normal;transform:scaleX(0.9956);">Clinic</span>
<span class="t" style="left:818.05px;top:829.65px;font-size:14px;line-height:17px;color:#111;font-weight:normal;transform:scaleX(0.9197);">Classic</span>
<span class="t" style="left:874.16px;top:829.65px;font-size:14px;line-height:17px;color:#111;font-weight:normal;transform:scaleX(0.9731);">10-02-2020 17:20:05</span>
<span class="t" style="left:1034.36px;top:829.65px;font-size:14px;line-height:17px;color:#008000;font-weight:bold;transform:scaleX(1.0000);">Y</span>
<div class="abs" style="left:1141px;top:829px;width:67px;height:26px;background:#d9d9d9"></div>
<div class="abs" style="left:1212px;top:829px;width:58px;height:26px;background:#d9d9d9"></div>
<div class="abs" style="left:1274px;top:829px;width:40px;height:26px;background:#d9d9d9"></div>
<svg class="abs" style="left:1150px;top:829px" width="160" height="26" viewBox="0 0 160 26"><path d="M4.3,20.6 L7.4,19.75 L15.85,11.95 L13.8,9.75 L5.4,17.55 Z" fill="none" stroke="#1c1c1c" stroke-width="1.45" stroke-linejoin="round"/><path d="M4.2,20.7 L6.0,20.27 L4.76,18.95 Z" fill="#1c1c1c" stroke="#1c1c1c" stroke-width="0.8"/><path d="M15.4,10.4 L17.4,8.5" stroke="#1c1c1c" stroke-width="3.2" stroke-linecap="round"/><g transform="translate(62,0)"><rect x="13.1" y="7.4" width="2.8" height="2.8" fill="none" stroke="#1c1c1c" stroke-width="1.05"/><rect x="13.1" y="12.4" width="2.8" height="2.8" fill="none" stroke="#1c1c1c" stroke-width="1.05"/><rect x="13.1" y="17.5" width="2.8" height="2.8" fill="none" stroke="#1c1c1c" stroke-width="1.05"/><rect x="18.4" y="7.9" width="9" height="1.5" fill="#1c1c1c"/><rect x="18.4" y="12.6" width="9" height="2.4" fill="#1c1c1c"/><rect x="18.4" y="17.7" width="9" height="2.4" fill="#1c1c1c"/></g><g transform="translate(124,0)"><path d="M13.3,7.7 L25.7,20.1 M25.7,7.7 L13.3,20.1" stroke="#1c1c1c" stroke-width="3.9" fill="none"/></g></svg>
<span class="t" style="left:1172.84px;top:833.65px;font-size:14px;line-height:17px;color:#111;font-weight:normal;transform:scaleX(0.9225);-webkit-text-stroke:0.2px #d9d9d9;">Edit</span>
<span class="t" style="left:1243.91px;top:833.25px;font-size:14px;line-height:17px;color:#111;font-weight:normal;transform:scaleX(0.8958);-webkit-text-stroke:0.25px #d9d9d9;">Q.</span>
<div class="abs" style="left:382px;top:874px;width:940px;height:1px;background:#e3e3e3"></div>
<span class="t" style="left:389.64px;top:883.65px;font-size:14px;line-height:17px;color:#111;font-weight:normal;transform:scaleX(0.9902);">1. Client Consultation Form</span>
<span class="t" style="left:658.00px;top:883.65px;font-size:14px;line-height:17px;color:#111;font-weight:normal;transform:scaleX(1.0071);">clinicsoftware</span>
<span class="t" style="left:818.05px;top:883.65px;font-size:14px;line-height:17px;color:#111;font-weight:normal;transform:scaleX(0.9197);">Classic</span>
<span class="t" style="left:874.67px;top:883.65px;font-size:14px;line-height:17px;color:#111;font-weight:normal;transform:scaleX(0.9731);">05-04-2017 08:11:14</span>
<span class="t" style="left:1034.36px;top:883.65px;font-size:14px;line-height:17px;color:#008000;font-weight:bold;transform:scaleX(1.0000);">Y</span>
<div class="abs" style="left:1141px;top:883px;width:67px;height:26px;background:#d9d9d9"></div>
<div class="abs" style="left:1212px;top:883px;width:58px;height:26px;background:#d9d9d9"></div>
<div class="abs" style="left:1274px;top:883px;width:40px;height:26px;background:#d9d9d9"></div>
<svg class="abs" style="left:1150px;top:883px" width="160" height="26" viewBox="0 0 160 26"><path d="M4.3,20.6 L7.4,19.75 L15.85,11.95 L13.8,9.75 L5.4,17.55 Z" fill="none" stroke="#1c1c1c" stroke-width="1.45" stroke-linejoin="round"/><path d="M4.2,20.7 L6.0,20.27 L4.76,18.95 Z" fill="#1c1c1c" stroke="#1c1c1c" stroke-width="0.8"/><path d="M15.4,10.4 L17.4,8.5" stroke="#1c1c1c" stroke-width="3.2" stroke-linecap="round"/><g transform="translate(62,0)"><rect x="13.1" y="7.4" width="2.8" height="2.8" fill="none" stroke="#1c1c1c" stroke-width="1.05"/><rect x="13.1" y="12.4" width="2.8" height="2.8" fill="none" stroke="#1c1c1c" stroke-width="1.05"/><rect x="13.1" y="17.5" width="2.8" height="2.8" fill="none" stroke="#1c1c1c" stroke-width="1.05"/><rect x="18.4" y="7.9" width="9" height="1.5" fill="#1c1c1c"/><rect x="18.4" y="12.6" width="9" height="2.4" fill="#1c1c1c"/><rect x="18.4" y="17.7" width="9" height="2.4" fill="#1c1c1c"/></g><g transform="translate(124,0)"><path d="M13.3,7.7 L25.7,20.1 M25.7,7.7 L13.3,20.1" stroke="#1c1c1c" stroke-width="3.9" fill="none"/></g></svg>
<span class="t" style="left:1172.84px;top:887.65px;font-size:14px;line-height:17px;color:#111;font-weight:normal;transform:scaleX(0.9225);-webkit-text-stroke:0.2px #d9d9d9;">Edit</span>
<span class="t" style="left:1243.91px;top:887.25px;font-size:14px;line-height:17px;color:#111;font-weight:normal;transform:scaleX(0.8958);-webkit-text-stroke:0.25px #d9d9d9;">Q.</span>
<div class="abs" style="left:382px;top:917px;width:940px;height:1px;background:#e3e3e3"></div>
<span class="t" style="left:389.64px;top:926.65px;font-size:14px;line-height:17px;color:#111;font-weight:normal;transform:scaleX(0.9964);">1. Consultation Form</span>
<span class="t" style="left:658.00px;top:926.65px;font-size:14px;line-height:17px;color:#111;font-weight:normal;transform:scaleX(1.0071);">clinicsoftware</span>
<span class="t" style="left:818.05px;top:926.65px;font-size:14px;line-height:17px;color:#111;font-weight:normal;transform:scaleX(0.9197);">Classic</span>
<span class="t" style="left:874.67px;top:926.65px;font-size:14px;line-height:17px;color:#111;font-weight:normal;transform:scaleX(0.9731);">09-07-2018 18:16:33</span>
<span class="t" style="left:1034.36px;top:926.65px;font-size:14px;line-height:17px;color:#008000;font-weight:bold;transform:scaleX(1.0000);">Y</span>
<div class="abs" style="left:1141px;top:926px;width:67px;height:26px;background:#d9d9d9"></div>
<div class="abs" style="left:1212px;top:926px;width:58px;height:26px;background:#d9d9d9"></div>
<div class="abs" style="left:1274px;top:926px;width:40px;height:26px;background:#d9d9d9"></div>
<svg class="abs" style="left:1150px;top:926px" width="160" height="26" viewBox="0 0 160 26"><path d="M4.3,20.6 L7.4,19.75 L15.85,11.95 L13.8,9.75 L5.4,17.55 Z" fill="none" stroke="#1c1c1c" stroke-width="1.45" stroke-linejoin="round"/><path d="M4.2,20.7 L6.0,20.27 L4.76,18.95 Z" fill="#1c1c1c" stroke="#1c1c1c" stroke-width="0.8"/><path d="M15.4,10.4 L17.4,8.5" stroke="#1c1c1c" stroke-width="3.2" stroke-linecap="round"/><g transform="translate(62,0)"><rect x="13.1" y="7.4" width="2.8" height="2.8" fill="none" stroke="#1c1c1c" stroke-width="1.05"/><rect x="13.1" y="12.4" width="2.8" height="2.8" fill="none" stroke="#1c1c1c" stroke-width="1.05"/><rect x="13.1" y="17.5" width="2.8" height="2.8" fill="none" stroke="#1c1c1c" stroke-width="1.05"/><rect x="18.4" y="7.9" width="9" height="1.5" fill="#1c1c1c"/><rect x="18.4" y="12.6" width="9" height="2.4" fill="#1c1c1c"/><rect x="18.4" y="17.7" width="9" height="2.4" fill="#1c1c1c"/></g><g transform="translate(124,0)"><path d="M13.3,7.7 L25.7,20.1 M25.7,7.7 L13.3,20.1" stroke="#1c1c1c" stroke-width="3.9" fill="none"/></g></svg>
<span class="t" style="left:1172.84px;top:930.65px;font-size:14px;line-height:17px;color:#111;font-weight:normal;transform:scaleX(0.9225);-webkit-text-stroke:0.2px #d9d9d9;">Edit</span>
<span class="t" style="left:1243.91px;top:930.25px;font-size:14px;line-height:17px;color:#111;font-weight:normal;transform:scaleX(0.8958);-webkit-text-stroke:0.25px #d9d9d9;">Q.</span>
<svg class="abs" style="left:328px;top:406px" width="16" height="22" viewBox="0 0 16 22">
<path d="M1.5,1.5 L1.5,17.2 L5.3,13.6 L7.9,19.6 L10.6,18.5 L8.1,12.6 L13.2,12.6 Z" fill="#fff" stroke="#111" stroke-width="1.05" stroke-linejoin="round"/>
</svg>
</body></html>
